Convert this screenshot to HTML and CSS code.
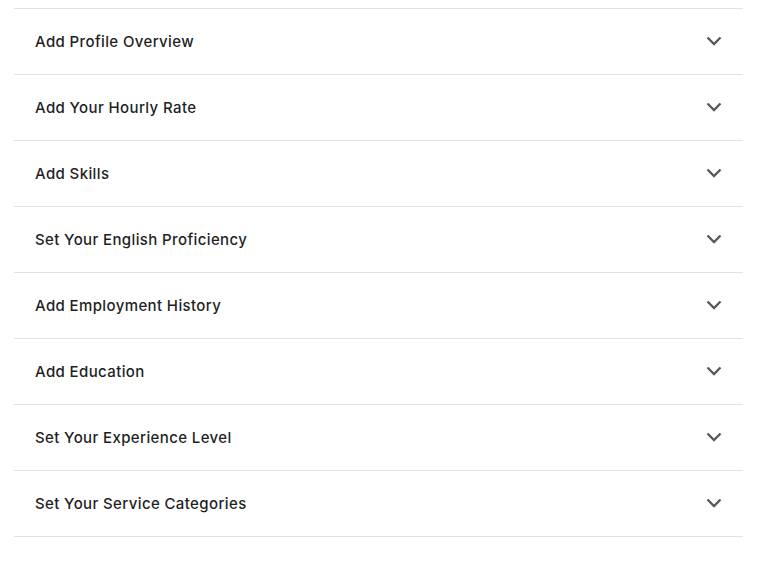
FILE: index.html
```html
<!DOCTYPE html>
<html>
<head>
<meta charset="utf-8">
<link rel="stylesheet" href="styles.css">
</head>
<body>
<div class="list">
  <div class="item"><span class="label">Add Profile Overview</span><svg class="chev" width="16" height="10" viewBox="0 0 16 10"><path d="M1.5 1.5 L8 8 L14.5 1.5" fill="none" stroke="#5a5757" stroke-width="2.3"/></svg></div>
  <div class="item"><span class="label">Add Your Hourly Rate</span><svg class="chev" width="16" height="10" viewBox="0 0 16 10"><path d="M1.5 1.5 L8 8 L14.5 1.5" fill="none" stroke="#5a5757" stroke-width="2.3"/></svg></div>
  <div class="item"><span class="label">Add Skills</span><svg class="chev" width="16" height="10" viewBox="0 0 16 10"><path d="M1.5 1.5 L8 8 L14.5 1.5" fill="none" stroke="#5a5757" stroke-width="2.3"/></svg></div>
  <div class="item"><span class="label">Set Your English Proficiency</span><svg class="chev" width="16" height="10" viewBox="0 0 16 10"><path d="M1.5 1.5 L8 8 L14.5 1.5" fill="none" stroke="#5a5757" stroke-width="2.3"/></svg></div>
  <div class="item"><span class="label">Add Employment History</span><svg class="chev" width="16" height="10" viewBox="0 0 16 10"><path d="M1.5 1.5 L8 8 L14.5 1.5" fill="none" stroke="#5a5757" stroke-width="2.3"/></svg></div>
  <div class="item"><span class="label">Add Education</span><svg class="chev" width="16" height="10" viewBox="0 0 16 10"><path d="M1.5 1.5 L8 8 L14.5 1.5" fill="none" stroke="#5a5757" stroke-width="2.3"/></svg></div>
  <div class="item"><span class="label">Set Your Experience Level</span><svg class="chev" width="16" height="10" viewBox="0 0 16 10"><path d="M1.5 1.5 L8 8 L14.5 1.5" fill="none" stroke="#5a5757" stroke-width="2.3"/></svg></div>
  <div class="item"><span class="label">Set Your Service Categories</span><svg class="chev" width="16" height="10" viewBox="0 0 16 10"><path d="M1.5 1.5 L8 8 L14.5 1.5" fill="none" stroke="#5a5757" stroke-width="2.3"/></svg></div>
</div>
</body>
</html>
```
FILE: styles.css
```css
html, body {
  margin: 0;
  padding: 0;
  background: #ffffff;
}
body {
  padding: 8px 22px 0 14px;
  font-family: Inter, "Liberation Sans", Arial, sans-serif;
}
.list {
  display: flex;
  flex-direction: column;
  border-bottom: 1px solid #e2e2e2;
}
.item {
  display: flex;
  align-items: center;
  justify-content: space-between;
  box-sizing: border-box;
  height: 66px;
  border-top: 1px solid #e2e2e2;
  padding: 0 21px 1px 21px;
}
.label {
  font-size: 15px;
  font-weight: 450;
  letter-spacing: 0.38px;
  color: #1f1f1f;
}
.chev {
  display: block;
}
```
